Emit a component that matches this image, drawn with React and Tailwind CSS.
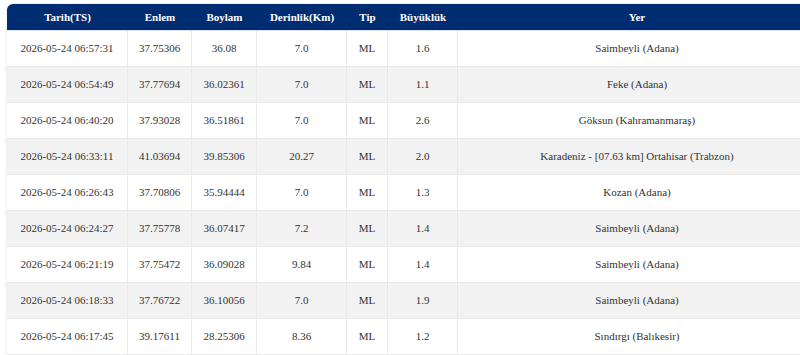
import React from 'react';

const rows = [
  ['2026-05-24 06:57:31', '37.75306', '36.08', '7.0', 'ML', '1.6', 'Saimbeyli (Adana)'],
  ['2026-05-24 06:54:49', '37.77694', '36.02361', '7.0', 'ML', '1.1', 'Feke (Adana)'],
  ['2026-05-24 06:40:20', '37.93028', '36.51861', '7.0', 'ML', '2.6', 'Göksun (Kahramanmaraş)'],
  ['2026-05-24 06:33:11', '41.03694', '39.85306', '20.27', 'ML', '2.0', 'Karadeniz - [07.63 km] Ortahisar (Trabzon)'],
  ['2026-05-24 06:26:43', '37.70806', '35.94444', '7.0', 'ML', '1.3', 'Kozan (Adana)'],
  ['2026-05-24 06:24:27', '37.75778', '36.07417', '7.2', 'ML', '1.4', 'Saimbeyli (Adana)'],
  ['2026-05-24 06:21:19', '37.75472', '36.09028', '9.84', 'ML', '1.4', 'Saimbeyli (Adana)'],
  ['2026-05-24 06:18:33', '37.76722', '36.10056', '7.0', 'ML', '1.9', 'Saimbeyli (Adana)'],
  ['2026-05-24 06:17:45', '39.17611', '28.25306', '8.36', 'ML', '1.2', 'Sındırgı (Balıkesir)'],
];

const headers = ['Tarih(TS)', 'Enlem', 'Boylam', 'Derinlik(Km)', 'Tip', 'Büyüklük', 'Yer'];

const cols = 'grid grid-cols-[121px_64px_65px_90px_41px_70px_358px]';

const App = () => {
  return (
    <div className="w-[800px] h-[355px] overflow-hidden bg-white [font-family:'Liberation_Serif',serif]">
      <div className="ml-[7px] mt-[4px] w-[809px] rounded-t-[6px] shadow-[0_0_3px_rgba(0,0,0,0.15)]">
        {/* Header */}
        <div className={`${cols} h-[27px] bg-[#002d72] rounded-t-[6px] border-b border-[#dfe3ea]`}>
          {headers.map(h => (
            <div key={h} className="flex items-center justify-center text-[11px] font-bold text-white">
              {h}
            </div>
          ))}
        </div>

        {/* Rows */}
        {rows.map((row, i) => (
          <div
            key={i}
            className={`${cols} h-[36px] border-b border-[#e9e9e9] ${i % 2 === 1 ? 'bg-[#f2f2f2]' : 'bg-white'}`}
          >
            {row.map((cell, j) => (
              <div
                key={j}
                className={`flex items-center justify-center text-[11px] text-[#333] ${j < 6 ? 'border-r border-[#e9e9e9]' : ''}`}
              >
                {cell}
              </div>
            ))}
          </div>
        ))}
      </div>
    </div>
  );
};

export default App;
